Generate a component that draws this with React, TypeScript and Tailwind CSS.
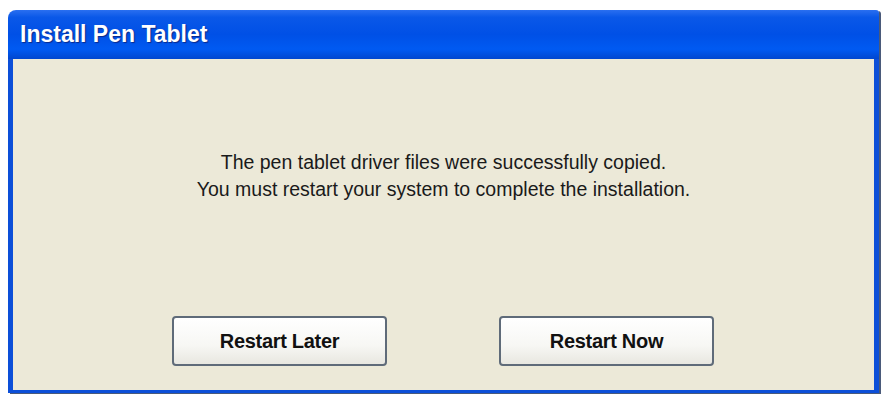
export default function App() {
  return (
    <div className="w-[887px] h-[398px] bg-white relative overflow-hidden" style={{ fontFamily: '"Liberation Sans", Arial, sans-serif' }}>
      <div className="absolute left-[8px] top-[10px] w-[871px] h-[383px] flex flex-col rounded-tl-[8px] rounded-tr-[3px] overflow-hidden shadow-[2px_1px_0_#4a5a7a]">
        {/* Title bar */}
        <div className="h-[49px] shrink-0 flex items-center pl-[12px] bg-[linear-gradient(to_bottom,#2a6ff0_0%,#0a58e8_15%,#0050e6_50%,#005af2_80%,#0046cf_100%)]">
          <span className="text-white font-bold text-[23px] [text-shadow:1px_1px_1px_#0a2a8a]">Install Pen Tablet</span>
        </div>
        {/* Body */}
        <div className="flex-1 flex border-x-[5px] border-b-[3px] border-[#0c4fd8] bg-[#ece9d8]">
          <div className="flex-1 flex flex-col items-center">
            <div className="mt-[90px] text-center text-[19.5px] leading-[27px] text-[#1a1a1a]">
              <p>The pen tablet driver files were successfully copied.</p>
              <p>You must restart your system to complete the installation.</p>
            </div>
            <div className="mt-[113px] flex gap-[112px] pr-[1px]">
              <button className="w-[215px] h-[50px] rounded-[4px] border-2 border-[#5f6b79] bg-[linear-gradient(to_bottom,#ffffff_0%,#f7f7f4_60%,#e8e7e0_100%)] text-[20px] font-bold text-[#111] tracking-[-0.3px]">
                Restart Later
              </button>
              <button className="w-[215px] h-[50px] rounded-[4px] border-2 border-[#5f6b79] bg-[linear-gradient(to_bottom,#ffffff_0%,#f7f7f4_60%,#e8e7e0_100%)] text-[20px] font-bold text-[#111] tracking-[-0.3px]">
                Restart Now
              </button>
            </div>
          </div>
        </div>
      </div>
    </div>
  );
}
